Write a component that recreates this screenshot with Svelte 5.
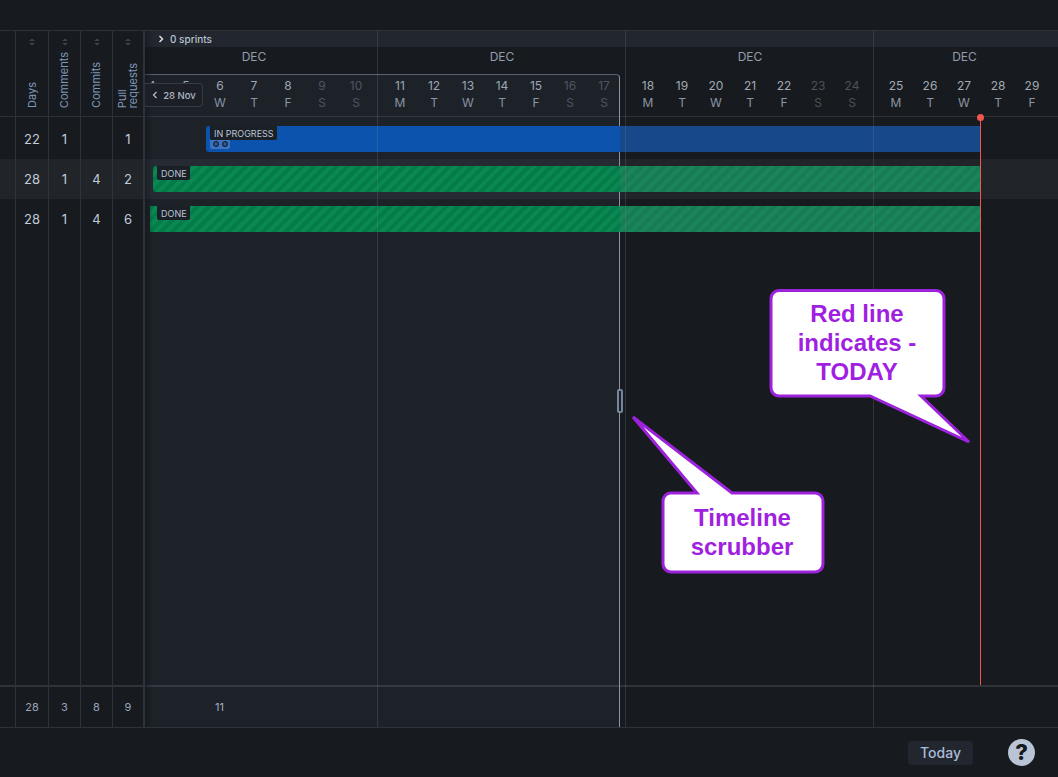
<script>
  const columns = [
    { label: ["Days"] },
    { label: ["Comments"] },
    { label: ["Commits"] },
    { label: ["Pull", "requests"] },
  ];

  // timeline starts at x=145 on the page, first week is cut off by it
  const timelineX = 145;
  const weekWidth = 248;
  const firstWeekX = -16;
  const scrubberX = 475;
  const todayX = 835;
  const letters = ["M", "T", "W", "T", "F", "S", "S"];
  const weeks = [4, 11, 18, 25].map((start, w) => ({
    month: "DEC",
    // last week only shows up to the window edge, its label centres on that part
    width: w === 3 ? 181 : weekWidth,
    days: letters
      .map((letter, i) => ({ n: start + i, letter, off: i > 4 }))
      .slice(0, w === 3 ? 5 : 7),
  }));

  const rows = [
    { cells: [22, 1, "", 1], status: "IN PROGRESS", kind: "progress", start: 206, labelAt: 4, badge: true },
    { cells: [28, 1, 4, 2], status: "DONE", kind: "done", start: 153, labelAt: 4, alt: true },
    { cells: [28, 1, 4, 6], status: "DONE", kind: "done", start: 150, labelAt: 7, square: true },
  ];

  const totals = [28, 3, 8, 9];
</script>

<div class="page">
  <div class="topbar"></div>

  <div class="gantt">
    <div class="table">
      <div class="table-head">
        <div class="cell"></div>
        {#each columns as col}
          <div class="cell head-cell">
            <svg class="sort" width="8" height="8" viewBox="0 0 8 8"><path d="M4 0.5 7 3H1zM4 7.5 1 5h6z" /></svg>
            <div class="vertical">
              {#each col.label as line}<span>{line}</span>{/each}
            </div>
          </div>
        {/each}
      </div>

      <div class="table-body">
        {#each rows as row}
          <div class="table-row" class:alt={row.alt}>
            <div class="cell"></div>
            {#each row.cells as value}
              <div class="cell num">{value}</div>
            {/each}
          </div>
        {/each}
      </div>

      <div class="table-foot">
        <div class="cell"></div>
        {#each totals as total}
          <div class="cell total">{total}</div>
        {/each}
      </div>
    </div>

    <div class="timeline">
      <div class="sprints">
        <svg width="8" height="8" viewBox="0 0 8 8"><path d="M2.5 1 5.5 4 2.5 7" fill="none" stroke="#e4e8ee" stroke-width="1.4" /></svg>
        <span>0 sprints</span>
      </div>

      <div class="weeks">
        {#each weeks as week}
          <div class="week" style="width: {week.width}px">
            <div class="month">{week.month}</div>
            <div class="days">
              {#each week.days as day}
                <div class="day" class:off={day.off}>
                  <span>{day.n}</span>
                  <span class="letter">{day.letter}</span>
                </div>
              {/each}
            </div>
          </div>
        {/each}
      </div>

      <button class="back" type="button">
        <svg width="8" height="8" viewBox="0 0 8 8"><path d="M5.5 1 2.5 4 5.5 7" fill="none" stroke="#b6bec9" stroke-width="1.2" /></svg>
        28 Nov
      </button>

      <div class="chart">
        {#each rows as row}
          <div class="chart-row" class:alt={row.alt}>
            <div
              class="bar {row.kind}"
              class:square={row.square}
              style="margin-left: {row.start - timelineX}px; width: {todayX - (row.start - timelineX)}px"
            >
              <div class="faded" style="left: {scrubberX - (row.start - timelineX)}px"></div>
              <div class="status" style="margin-left: {row.labelAt}px">{row.status}</div>
              {#if row.badge}
                <div class="badge">
                  <svg width="20" height="9" viewBox="0 0 20 9">
                    <circle cx="6" cy="4" r="2.3" fill="#2b5da8" stroke="#1b2430" stroke-width="1.3" />
                    <circle cx="15" cy="4" r="2.3" fill="#2b5da8" stroke="#1b2430" stroke-width="1.3" />
                  </svg>
                </div>
              {/if}
            </div>
          </div>
        {/each}
      </div>

      <div class="timeline-foot">
        <span class="count">11</span>
      </div>

      {#each weeks as week, i}
        {#if i > 0}
          <div class="week-line" style="left: {firstWeekX + i * weekWidth}px"></div>
        {/if}
      {/each}

      <div class="scrub" style="width: {scrubberX}px"></div>
      <div class="handle" style="left: {scrubberX - 3}px"></div>
      <div class="edge-shadow"></div>

      <div class="today" style="left: {todayX}px"></div>
    </div>
  </div>

  <div class="bottombar">
    <button class="today-btn" type="button">Today</button>
    <button class="help" type="button">?</button>
  </div>

  <svg class="callouts" width="1058" height="777" viewBox="0 0 1058 777">
    <path d="M779 290.5H936a8 8 0 0 1 8 8V388a8 8 0 0 1-8 8H921L969 442 870 396H779a8 8 0 0 1-8-8V298.5a8 8 0 0 1 8-8Z" />
    <text x="857" y="322">Red line</text>
    <text x="857" y="351">indicates -</text>
    <text x="857" y="380">TODAY</text>

    <path d="M670 493H697L633 417 732 493H815a8 8 0 0 1 8 8V564a8 8 0 0 1-8 8H671a8 8 0 0 1-8-8V501a8 8 0 0 1 7-8Z" />
    <text x="742.5" y="526">Timeline</text>
    <text x="742" y="555">scrubber</text>
  </svg>
</div>

<style>
  :global(body) {
    background: #171a1e;
  }

  .page {
    position: relative;
    display: flex;
    flex-direction: column;
    height: 777px;
    overflow: hidden;
    font-family: Inter, "Liberation Sans", sans-serif;
    background: #171a1e;
    color: #c0cbdb;
  }

  .topbar {
    height: 30px;
    flex: none;
  }

  .gantt {
    flex: 1;
    display: flex;
    min-height: 0;
    border-top: 1px solid #2d3339;
    border-bottom: 1px solid #2d3339;
  }

  /* left table */
  .table {
    width: 145px;
    flex: none;
    display: flex;
    flex-direction: column;
  }

  .table-head,
  .table-row,
  .table-foot {
    display: grid;
    grid-template-columns: 16px 33px 32px 32px 32px;
  }

  .table-head {
    height: 86px;
    border-bottom: 1px solid #2d3339;
    box-sizing: border-box;
  }

  .table-body {
    flex: 1;
    padding-top: 2px;
    background-image: linear-gradient(#2d3339, #2d3339), linear-gradient(#2d3339, #2d3339),
      linear-gradient(#2d3339, #2d3339), linear-gradient(#2d3339, #2d3339), linear-gradient(#2d3339, #2d3339);
    background-size: 1px 100%, 1px 100%, 1px 100%, 1px 100%, 2px 100%;
    background-position: 15px 0, 48px 0, 80px 0, 112px 0, 143px 0;
    background-repeat: no-repeat;
  }

  .table-row {
    height: 40px;
  }

  .alt {
    background: #212428;
  }

  .table-foot {
    height: 42px;
    border-top: 2px solid #2f3439;
    box-sizing: border-box;
  }

  .cell {
    border-right: 1px solid #2d3339;
    box-sizing: border-box;
  }

  .cell:last-child {
    border-right-width: 2px;
  }

  .head-cell {
    display: flex;
    flex-direction: column;
    align-items: center;
    justify-content: space-between;
    padding: 7px 0 8px;
  }

  .sort {
    fill: #3d444c;
  }

  .vertical {
    display: flex;
    flex-direction: column;
    writing-mode: vertical-rl;
    transform: rotate(180deg);
    font-size: 11px;
    line-height: 11px;
    color: #7f97b9;
  }

  .num {
    display: flex;
    align-items: center;
    justify-content: center;
    font-size: 13px;
  }

  .total {
    display: flex;
    align-items: center;
    justify-content: center;
    font-size: 11px;
    color: #97a5ba;
  }

  /* timeline */
  .timeline {
    position: relative;
    flex: 1;
    min-width: 0;
    display: flex;
    flex-direction: column;
    overflow: hidden;
  }

  .sprints {
    height: 16px;
    flex: none;
    display: flex;
    align-items: center;
    gap: 5px;
    padding-left: 12px;
    background: #22262e;
    font-size: 10px;
    font-weight: 500;
    color: #b6c1d0;
  }

  .weeks {
    height: 70px;
    flex: none;
    display: flex;
    margin-left: -16px;
    border-bottom: 1px solid #2d3339;
    box-sizing: border-box;
  }

  .week {
    flex: none;
    box-sizing: border-box;
    padding-left: 2px;
  }

  .month {
    height: 20px;
    line-height: 20px;
    text-align: center;
    font-size: 12px;
    color: #939dab;
  }

  .days {
    display: flex;
    padding: 12px 0 0 4px;
  }

  .day {
    width: 34px;
    flex: none;
    display: flex;
    flex-direction: column;
    align-items: center;
    gap: 3px;
    font-size: 12px;
    line-height: 14px;
    color: #a2aab5;
  }

  .letter {
    color: #8b95a3;
  }

  .day.off,
  .day.off .letter {
    color: #4c525b;
  }

  .back {
    position: absolute;
    left: 0;
    top: 52px;
    z-index: 4;
    width: 58px;
    height: 24px;
    display: flex;
    align-items: center;
    justify-content: center;
    gap: 4px;
    padding: 0;
    background: #1c2026;
    border: 1px solid #353b43;
    border-left: 0;
    border-radius: 0 4px 4px 0;
    font: 500 9.5px Inter, "Liberation Sans", sans-serif;
    color: #aeb7c4;
  }

  .chart {
    flex: 1;
    padding-top: 2px;
  }

  .chart-row {
    height: 33px;
    padding-top: 7px;
  }

  .bar {
    position: relative;
    z-index: 2;
    height: 26px;
    border-radius: 3px 0 0 3px;
    overflow: hidden;
  }

  .bar.square {
    border-radius: 0;
  }

  .progress {
    background: #0c53ad;
  }

  .done {
    background: repeating-linear-gradient(135deg, #047c49 0 4px, #0a8852 4px 8px);
  }

  .faded {
    position: absolute;
    top: 0;
    right: 0;
    bottom: 0;
  }

  .progress .faded {
    background: rgba(56, 40, 32, 0.25);
  }

  .done .faded {
    background: rgba(80, 125, 115, 0.25);
  }

  .status {
    position: relative;
    width: fit-content;
    height: 14px;
    padding: 0 3px 0 4px;
    background: #1b1f26;
    border-radius: 0 0 2px 2px;
    font-size: 9px;
    line-height: 15px;
    color: #b9c5d6;
  }

  .badge {
    position: relative;
    width: 20px;
    height: 9px;
    margin-left: 4px;
    background: #3c72c2;
    border-radius: 0 0 2px 2px;
    line-height: 0;
  }

  .timeline-foot {
    height: 42px;
    flex: none;
    box-sizing: border-box;
    border-top: 2px solid #2f3439;
    display: flex;
    align-items: center;
    padding-left: 70px;
    font-size: 11px;
    color: #a8b4c4;
  }

  .week-line {
    position: absolute;
    top: 0;
    bottom: 0;
    z-index: 3;
    width: 1px;
    background: rgba(125, 135, 150, 0.24);
  }

  .scrub {
    position: absolute;
    left: 0;
    top: 43px;
    bottom: 0;
    z-index: 1;
    box-sizing: border-box;
    background: rgba(110, 140, 190, 0.075);
    border-top: 1px solid #59626e;
    border-right: 1px solid #8a94a3;
    border-top-right-radius: 4px;
  }

  .handle {
    position: absolute;
    top: 358px;
    z-index: 3;
    width: 6px;
    height: 24px;
    box-sizing: border-box;
    background: #1b2027;
    border: 2px solid #76869c;
    border-radius: 2px;
  }

  .edge-shadow {
    position: absolute;
    left: 0;
    top: 0;
    bottom: 0;
    z-index: 3;
    width: 8px;
    pointer-events: none;
    background: linear-gradient(90deg, rgba(16, 18, 21, 0.45), rgba(16, 18, 21, 0));
  }

  .today {
    position: absolute;
    top: 86px;
    height: 568px;
    z-index: 3;
    width: 1px;
    background: #f2564c;
  }

  .today::before {
    content: "";
    position: absolute;
    left: -3px;
    top: -3px;
    width: 7px;
    height: 7px;
    border-radius: 50%;
    background: #f2564c;
  }

  /* bottom bar */
  .bottombar {
    height: 49px;
    flex: none;
    display: flex;
    align-items: center;
    justify-content: flex-end;
    gap: 35px;
    padding: 0 23px 0 0;
  }

  .today-btn {
    width: 65px;
    height: 24px;
    padding: 0;
    background: #22262e;
    border: 0;
    border-radius: 3px;
    font: 500 14px Inter, "Liberation Sans", sans-serif;
    color: #a9bcd7;
  }

  .help {
    width: 27px;
    height: 27px;
    padding: 0;
    background: #b9c5d6;
    border: 0;
    border-radius: 50%;
    font: 800 22px/27px Inter, "Liberation Sans", sans-serif;
    color: #16191d;
  }

  /* annotations drawn on top of the screenshot */
  .callouts {
    position: absolute;
    left: 0;
    top: 0;
    z-index: 10;
    pointer-events: none;
  }

  .callouts path {
    fill: #fff;
    stroke: #9c22dc;
    stroke-width: 3;
  }

  .callouts text {
    text-anchor: middle;
    font: 700 24px "Liberation Sans", Arial, sans-serif;
    fill: #a01fe0;
  }
</style>
